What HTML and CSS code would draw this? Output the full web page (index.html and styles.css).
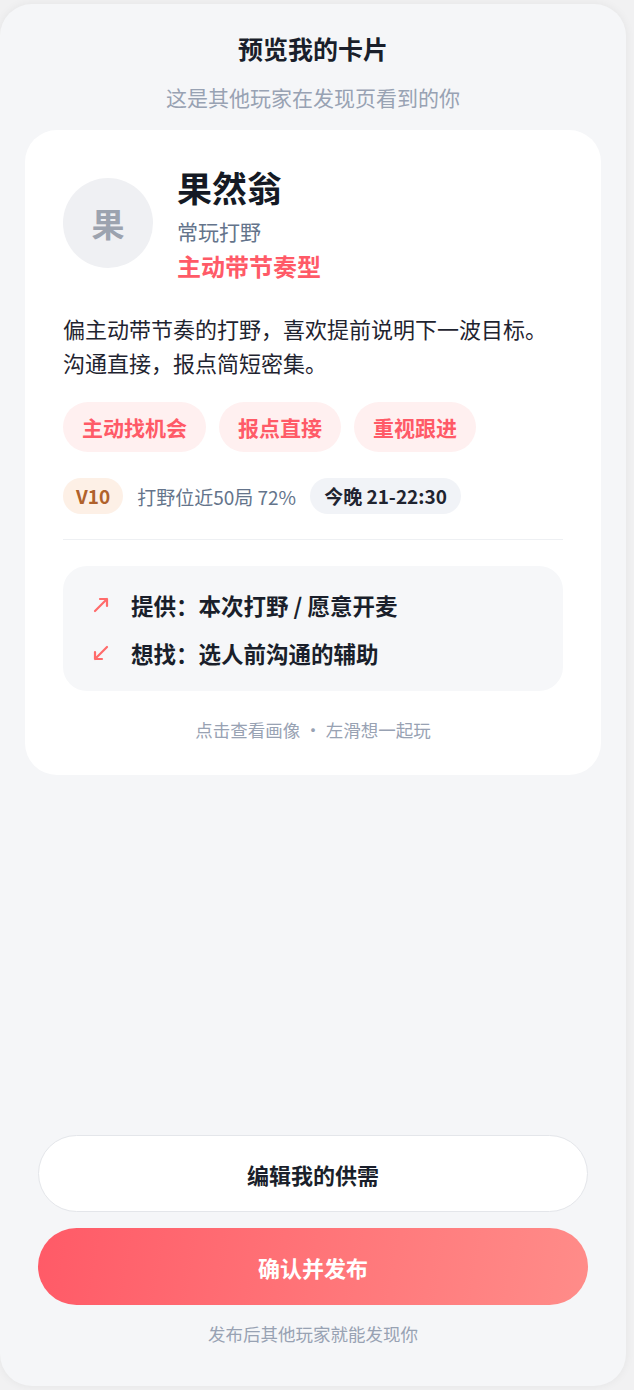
FILE: index.html
```html
<!DOCTYPE html>
<html lang="zh-CN">
<head>
  <meta charset="UTF-8">
  <meta name="viewport" content="width=device-width, initial-scale=1.0">
  <title>预览我的卡片</title>
  <link rel="stylesheet" href="styles.css">
</head>
<body>
  <div class="sheet">
    <div class="sheet-head">
      <h1>预览我的卡片</h1>
      <p class="sub">这是其他玩家在发现页看到的你</p>
    </div>

    <!-- 卡片预览 -->
    <div class="card">
      <div class="profile">
        <div class="avatar">果</div>
        <div class="who">
          <div class="name">果然翁</div>
          <div class="role">常玩打野</div>
          <div class="style">主动带节奏型</div>
        </div>
      </div>

      <p class="desc">偏主动带节奏的打野，喜欢提前说明下一波目标。沟通直接，报点简短密集。</p>

      <div class="tags">
        <span class="tag">主动找机会</span>
        <span class="tag">报点直接</span>
        <span class="tag">重视跟进</span>
      </div>

      <div class="meta">
        <span class="level">V10</span>
        <span class="stat">打野位近50局 72%</span>
        <span class="time">今晚 21-22:30</span>
      </div>

      <div class="divider"></div>

      <div class="offer">
        <div class="offer-row">
          <svg class="arrow" viewBox="0 0 16 16" width="16" height="16"><path d="M2 14 L14 2 M7 2 H14 V9" fill="none" stroke="#ff6b6b" stroke-width="2.2" stroke-linecap="round" stroke-linejoin="round"/></svg>
          <span>提供：本次打野 / 愿意开麦</span>
        </div>
        <div class="offer-row">
          <svg class="arrow" viewBox="0 0 16 16" width="16" height="16"><path d="M14 2 L2 14 M2 7 V14 H9" fill="none" stroke="#ff6b6b" stroke-width="2.2" stroke-linecap="round" stroke-linejoin="round"/></svg>
          <span>想找：选人前沟通的辅助</span>
        </div>
      </div>

      <p class="hint">点击查看画像 · 左滑想一起玩</p>
    </div>

    <div class="spacer"></div>

    <div class="actions">
      <button class="btn btn-edit">编辑我的供需</button>
      <button class="btn btn-publish">确认并发布</button>
      <p class="hint">发布后其他玩家就能发现你</p>
    </div>
  </div>
</body>
</html>
```

FILE: styles.css
```css
body {
  margin: 0;
  background-color: #f1f1f2;
  font-family: "Noto Sans CJK SC", "Noto Sans", sans-serif;
  color: #1f2430;
}

.sheet {
  width: 626px;
  height: 1382px;
  margin: 4px 0;
  box-sizing: border-box;
  background-color: #f5f6f8;
  border-radius: 32px;
  box-shadow: 0 0 10px rgba(0, 0, 0, 0.06);
  display: flex;
  flex-direction: column;
  padding: 0 25px;
}

.sheet-head {
  text-align: center;
  padding-top: 28px;
}

.sheet-head h1 {
  margin: 0;
  font-size: 25px;
  line-height: 32px;
  font-weight: 700;
  color: #1a1f2b;
}

.sheet-head .sub {
  margin: 19px 0 0;
  font-size: 21px;
  line-height: 28px;
  color: #98a2b3;
}

/* 卡片 */
.card {
  margin-top: 19px;
  background-color: #fff;
  border-radius: 32px;
  padding: 34px 38px 34px;
}

.profile {
  display: flex;
  align-items: center;
  gap: 24px;
}

.avatar {
  width: 90px;
  height: 90px;
  border-radius: 50%;
  background-color: #eff0f3;
  color: #9ca3af;
  font-size: 33px;
  font-weight: 700;
  display: flex;
  align-items: center;
  justify-content: center;
  flex-shrink: 0;
}

.name {
  font-size: 35px;
  line-height: 46px;
  font-weight: 700;
  color: #151a24;
}

.role {
  margin-top: 6px;
  font-size: 21px;
  line-height: 30px;
  color: #64748b;
}

.style {
  margin-top: 4px;
  font-size: 24px;
  line-height: 32px;
  font-weight: 700;
  color: #ff5a67;
}

.desc {
  margin: 29px 0 0;
  font-size: 22px;
  line-height: 34px;
  color: #1f2430;
}

.tags {
  display: flex;
  gap: 13px;
  margin-top: 23px;
}

.tag {
  background-color: #fff0f0;
  color: #ff5a67;
  font-size: 21px;
  font-weight: 700;
  line-height: 30px;
  padding: 10px 19px;
  border-radius: 25px;
}

.meta {
  display: flex;
  align-items: center;
  gap: 14px;
  margin-top: 26px;
}

.level {
  background-color: #fdf0e6;
  color: #b0622c;
  font-size: 19px;
  font-weight: 700;
  line-height: 36px;
  padding: 0 13px;
  border-radius: 18px;
}

.stat {
  font-size: 19px;
  color: #64748b;
}

.time {
  background-color: #f1f3f7;
  color: #1f2430;
  font-size: 19px;
  font-weight: 700;
  line-height: 36px;
  padding: 0 14px;
  border-radius: 18px;
}

.divider {
  height: 1px;
  background-color: #eef0f3;
  margin-top: 25px;
}

.offer {
  margin-top: 26px;
  background-color: #f6f7f9;
  border-radius: 24px;
  padding: 24px 30px 23px;
  display: flex;
  flex-direction: column;
  gap: 18px;
}

.offer-row {
  display: flex;
  align-items: center;
  gap: 22px;
  font-size: 22.5px;
  line-height: 30px;
  font-weight: 700;
  color: #1a1f2b;
}

.hint {
  margin: 28px 0 0;
  text-align: center;
  font-size: 17.5px;
  line-height: 22px;
  color: #98a2b3;
}

.spacer {
  flex: 1;
}

/* 底部按钮 */
.actions {
  padding: 0 13px 41px;
  display: flex;
  flex-direction: column;
  gap: 16px;
}

.btn {
  height: 77px;
  border-radius: 39px;
  font-family: inherit;
  font-size: 22px;
  font-weight: 700;
  cursor: pointer;
}

.btn-edit {
  background-color: #fff;
  border: 1.5px solid #e4e6ea;
  color: #1a1f2b;
}

.btn-publish {
  border: none;
  color: #fff;
  background: linear-gradient(100deg, #ff5a67 0%, #ff7478 50%, #ff8c89 100%);
}

.actions .hint {
  margin-top: 2px;
}
```
